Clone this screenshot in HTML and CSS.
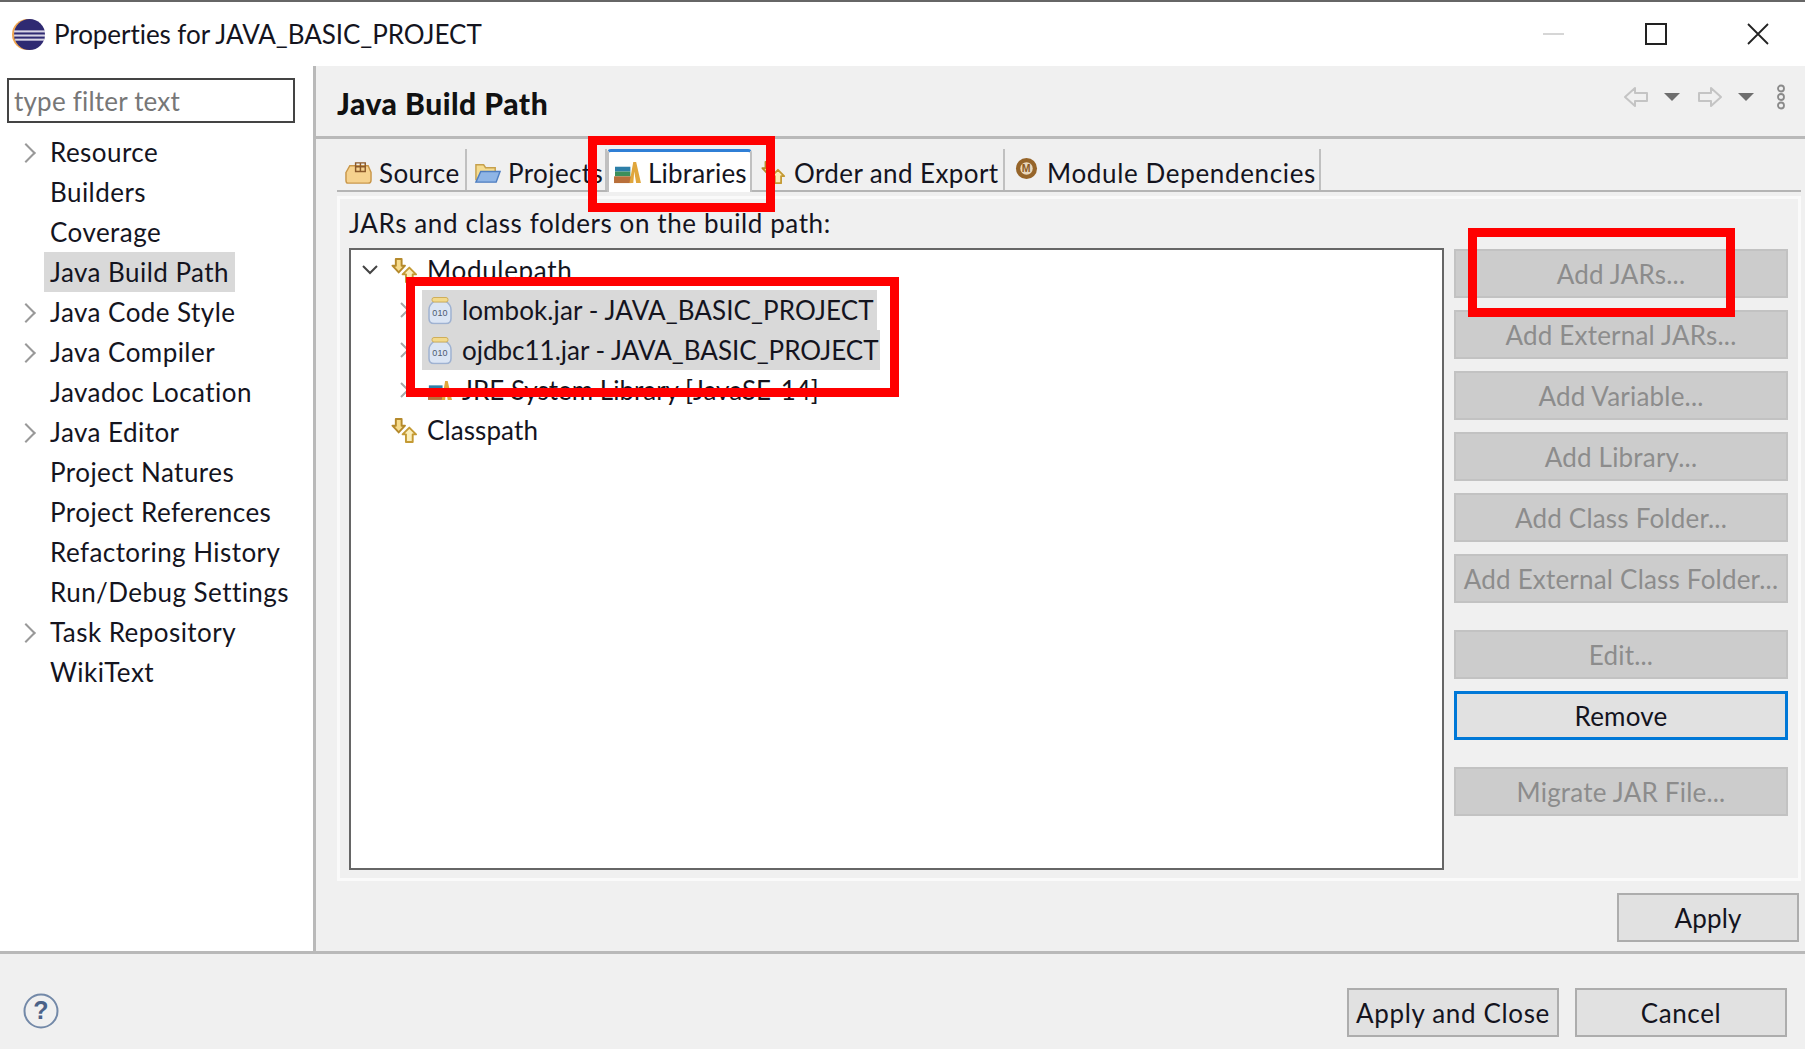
FILE: index.html
```html
<!DOCTYPE html>
<html lang="en">
<head>
  <meta charset="UTF-8" />
  <title>Properties for JAVA_BASIC_PROJECT</title>
  <link rel="stylesheet" href="styles.css">
</head>
<body>

<svg class="defs" width="0" height="0">
  <symbol id="i-arrows" viewBox="0 0 28 28">
    <path d="M5 2h6v7h3.500l-6.500 7-6.500-7H5z" fill="#f7dc8c" stroke="#b58a2c" stroke-width="2" stroke-linejoin="round"/>
    <path d="M19 11l7 7h-3.500v8h-7v-8H12z" fill="#fbeebb" stroke="#c49a34" stroke-width="2" stroke-linejoin="round"/>
  </symbol>
  <symbol id="i-jar" viewBox="0 0 24 28">
    <path d="M6 5h12c3 2 5 4 5 8v9c0 3-2 5-5 5H6c-3 0-5-2-5-5v-9c0-4 2-6 5-8z" fill="#dbe5f4" stroke="#9fb2d1" stroke-width="1.500"/>
    <rect x="4" y="1" width="16" height="4.500" rx="2" fill="#f2d98c" stroke="#cfae5a"/>
  </symbol>
  <symbol id="i-books" viewBox="0 0 28 26">
    <rect x="1" y="7" width="16" height="5" fill="#2d7fa8"/>
    <rect x="1" y="12" width="16" height="5" fill="#3c8f5b"/>
    <rect x="0" y="17" width="18" height="7" fill="#b96f3a"/>
    <path d="M16 24L20 2h3l5 22h-5l-2-12-1 12z" fill="#e0a63c"/>
  </symbol>
</svg>

<header class="titlebar">
  <svg class="logo" viewBox="0 0 32 32">
    <circle cx="15" cy="16" r="15" fill="#f0a650"/>
    <circle cx="17" cy="16" r="15" fill="#2f2a72"/>
    <rect x="2" y="12" width="30" height="2" fill="#d9d6e6"/>
    <rect x="2" y="16" width="30" height="2" fill="#d9d6e6"/>
    <rect x="3" y="20" width="28" height="2" fill="#d9d6e6"/>
  </svg>
  <span class="titlebar-text">Properties for JAVA_BASIC_PROJECT</span>
  <div class="winbtns">
    <svg class="winbtn" viewBox="0 0 22 22"><path d="M0 11h21" stroke="#c8c8c8" stroke-width="1.500"/></svg>
    <svg class="winbtn" viewBox="0 0 22 22"><rect x="1" y="1" width="20" height="20" fill="none" stroke="#222" stroke-width="2"/></svg>
    <svg class="winbtn" viewBox="0 0 22 22"><path d="M1 1l20 20M21 1L1 21" stroke="#222" stroke-width="1.800"/></svg>
  </div>
</header>

<div class="middle">
  <aside class="sidebar">
    <input class="filter" type="text" placeholder="type filter text">
    <ul class="navtree">
      <li class="has-kids">Resource</li>
      <li>Builders</li>
      <li>Coverage</li>
      <li class="current"><span>Java Build Path</span></li>
      <li class="has-kids">Java Code Style</li>
      <li class="has-kids">Java Compiler</li>
      <li>Javadoc Location</li>
      <li class="has-kids">Java Editor</li>
      <li>Project Natures</li>
      <li>Project References</li>
      <li>Refactoring History</li>
      <li>Run/Debug Settings</li>
      <li class="has-kids">Task Repository</li>
      <li>WikiText</li>
    </ul>
  </aside>

  <main class="content">
    <div class="page-head">
      <h1>Java Build Path</h1>
      <div class="page-tools">
        <svg class="nav-arrow" viewBox="0 0 26 22"><path d="M12 2L2 11l10 9v-5h12V7H12z" fill="none" stroke="#c4c4c4" stroke-width="2" stroke-linejoin="round"/></svg>
        <span class="caret"></span>
        <svg class="nav-arrow" viewBox="0 0 26 22"><path d="M14 2l10 9-10 9v-5H2V7h12z" fill="none" stroke="#c4c4c4" stroke-width="2" stroke-linejoin="round"/></svg>
        <span class="caret"></span>
        <svg class="dots" viewBox="0 0 10 26"><g fill="none" stroke="#8a8a8a" stroke-width="1.800"><circle cx="5" cy="4.500" r="3"/><circle cx="5" cy="13" r="3"/><circle cx="5" cy="21.500" r="3"/></g></svg>
      </div>
    </div>

    <div class="tabs">
      <div class="tab tab-source">
        <svg class="tab-icon" viewBox="0 0 28 24">
          <path d="M1 12l4-7h19l3 7v8c0 2-1 3-3 3H3c-1 0-2-1-2-3z" fill="#f6d28e" stroke="#c9974a" stroke-width="1.500"/>
          <path d="M11 2h10v9H11zM16 2v9M11 6h10" fill="none" stroke="#8c5a2a" stroke-width="1.500"/>
        </svg>
        Source
      </div>
      <div class="tab tab-projects">
        <svg class="tab-icon" viewBox="0 0 28 24">
          <path d="M2 20V4h8l2 3h10v5" fill="#f5dc90" stroke="#c6a04c" stroke-width="1.500"/>
          <path d="M7 11h20l-4 11H2z" fill="#8fb5e6" stroke="#4f7ec0" stroke-width="1.500"/>
        </svg>
        Projects
      </div>
      <div class="tab tab-active tab-libs">
        <svg class="tab-icon" viewBox="0 0 28 26"><use href="#i-books"/></svg>
        Libraries
      </div>
      <div class="tab tab-order">
        <svg class="tab-icon" viewBox="0 0 28 28"><use href="#i-arrows"/></svg>
        Order and Export
      </div>
      <div class="tab tab-module">
        <svg class="tab-icon module-icon" viewBox="0 0 24 24">
          <circle cx="12" cy="12" r="11" fill="#96652a"/>
          <circle cx="12" cy="12" r="6.500" fill="#e9d8bd"/>
          <text x="12" y="16" class="module-m">M</text>
        </svg>
        Module Dependencies
      </div>
    </div>

    <section class="panel">
      <div class="panel-label">JARs and class folders on the build path:</div>
      <div class="panel-body">
        <div class="pathtree">
          <div class="row">
            <svg class="chev" viewBox="0 0 16 10"><path d="M1 1l7 7 7-7" fill="none" stroke="#444" stroke-width="2"/></svg>
            <svg class="row-icon" viewBox="0 0 28 28"><use href="#i-arrows"/></svg>
            <span class="row-wider">Modulepath</span>
          </div>
          <div class="row row-sub row-selected">
            <svg class="chev-side" viewBox="0 0 10 16"><path d="M1 1l7 7-7 7" fill="none" stroke="#a8a8a8" stroke-width="2"/></svg>
            <svg class="row-icon" viewBox="0 0 24 28"><use href="#i-jar"/><text x="12" y="19" class="jar-bits">010</text></svg>
            <span>lombok.jar - JAVA_BASIC_PROJECT</span>
          </div>
          <div class="row row-sub row-selected row-wide">
            <svg class="chev-side" viewBox="0 0 10 16"><path d="M1 1l7 7-7 7" fill="none" stroke="#a8a8a8" stroke-width="2"/></svg>
            <svg class="row-icon" viewBox="0 0 24 28"><use href="#i-jar"/><text x="12" y="19" class="jar-bits">010</text></svg>
            <span class="row-tight">ojdbc11.jar - JAVA_BASIC_PROJECT</span>
          </div>
          <div class="row row-sub">
            <svg class="chev-side" viewBox="0 0 10 16"><path d="M1 1l7 7-7 7" fill="none" stroke="#a8a8a8" stroke-width="2"/></svg>
            <svg class="row-icon" viewBox="0 0 28 26"><use href="#i-books"/></svg>
            <span class="row-tight">JRE System Library [JavaSE-14]</span>
          </div>
          <div class="row">
            <span class="chev-gap"></span>
            <svg class="row-icon" viewBox="0 0 28 28"><use href="#i-arrows"/></svg>
            <span>Classpath</span>
          </div>
        </div>
        <div class="side-buttons">
          <button class="btn" disabled>Add JARs...</button>
          <button class="btn" disabled>Add External JARs...</button>
          <button class="btn" disabled>Add Variable...</button>
          <button class="btn" disabled>Add Library...</button>
          <button class="btn" disabled>Add Class Folder...</button>
          <button class="btn" disabled>Add External Class Folder...</button>
          <button class="btn btn-spaced" disabled>Edit...</button>
          <button class="btn btn-focus">Remove</button>
          <button class="btn btn-spaced" disabled>Migrate JAR File...</button>
        </div>
      </div>
    </section>

    <div class="apply-row">
      <button class="btn btn-apply">Apply</button>
    </div>
  </main>
</div>

<footer class="footer">
  <svg class="help" viewBox="0 0 36 36">
    <circle cx="18" cy="18" r="16.500" fill="none" stroke="#7389a8" stroke-width="2"/>
    <text x="18" y="26" class="help-q">?</text>
  </svg>
  <div class="footer-btns">
    <button class="btn btn-footer">Apply and Close</button>
    <button class="btn btn-footer">Cancel</button>
  </div>
</footer>

<!-- marcas rojas del tutorial -->
<div class="mark mark-tab"></div>
<div class="mark mark-jars"></div>
<div class="mark mark-add"></div>

</body>
</html>
```

FILE: styles.css
```css
* { margin: 0; padding: 0; box-sizing: border-box; }

body {
  width: 1805px;
  height: 1049px;
  overflow: hidden;
  position: relative;
  display: flex;
  flex-direction: column;
  background: #f0f0f0;
  font-family: Lato, 'Noto Sans', sans-serif;
  font-size: 26px;
  color: #14141e;
}

.defs { position: absolute; }

.jar-bits {
  font-family: 'Liberation Sans', sans-serif;
  font-size: 9px;
  text-anchor: middle;
  fill: #4d5a70;
}

/* Barra de titulo */
.titlebar {
  height: 66px;
  background: white;
  border-top: 2px solid #666;
  display: flex;
  align-items: center;
  padding-left: 12px;
  flex-shrink: 0;
}
.logo { width: 33px; height: 33px; margin-right: 9px; }
.titlebar-text { letter-spacing: -0.06px; }
.winbtns {
  margin-left: auto;
  display: flex;
  gap: 80px;
  padding-right: 36px;
}
.winbtn { width: 22px; height: 22px; display: block; }

.middle {
  height: 885px;
  display: flex;
  flex-shrink: 0;
}

/* Panel izquierdo */
.sidebar {
  width: 316px;
  background: white;
  border-right: 3px solid #b9b9b9;
  padding: 12px 0 0 7px;
  flex-shrink: 0;
}
.filter {
  display: block;
  width: 288px;
  height: 45px;
  border: 2px solid #444;
  font: inherit;
  letter-spacing: 0.2px;
  padding: 0 5px;
  outline: none;
}
.filter::placeholder { color: #777; opacity: 1; }

.navtree { list-style: none; margin-top: 9px; letter-spacing: 0.45px; }
.navtree li {
  height: 40px;
  line-height: 40px;
  padding-left: 43px;
  position: relative;
}
.navtree .has-kids::before {
  content: "";
  position: absolute;
  left: 12px;
  top: 14px;
  width: 12px;
  height: 12px;
  border-top: 2px solid #999;
  border-right: 2px solid #999;
  transform: rotate(45deg);
}
.navtree .current { padding-left: 37px; }
.navtree .current span {
  display: inline-block;
  height: 40px;
  padding: 0 6px;
  background: #d9d9d9;
}

/* Contenido */
.content { flex: 1; display: flex; flex-direction: column; }

.page-head {
  height: 73px;
  border-bottom: 3px solid #b9b9b9;
  display: flex;
  align-items: center;
  padding-left: 21px;
  flex-shrink: 0;
}
h1 {
  font-size: 30px;
  font-weight: 900;
  letter-spacing: 0.5px;
  color: #111;
  padding-top: 3px;
}
.page-tools {
  margin-left: auto;
  display: flex;
  align-items: center;
  padding: 0 19px 8px 0;
}
.nav-arrow { width: 26px; height: 22px; }
.caret {
  width: 0;
  height: 0;
  border-left: 8px solid transparent;
  border-right: 8px solid transparent;
  border-top: 8px solid #6e6e6e;
  margin: 0 17px 0 15px;
}
.dots { width: 10px; height: 26px; margin-left: 5px; }

.tabs {
  height: 43px;
  margin: 10px 4px 0 21px;
  display: flex;
  align-items: stretch;
  border-bottom: 2px solid #b5b5b5;
  letter-spacing: 0.4px;
  flex-shrink: 0;
}
.tab {
  display: flex;
  align-items: center;
  gap: 7px;
  padding: 6px 0 0 8px;
  border-right: 2px solid #c0c0c0;
  flex-shrink: 0;
}
.tab-icon { width: 27px; height: 25px; flex-shrink: 0; }
.tab-source { width: 130px; }
.tab-projects { width: 140px; padding-left: 7px; }
.tab-libs { width: 145px; letter-spacing: 0.2px; }
.tab-order { width: 253px; padding-left: 8px; }
.tab-module { width: 316px; padding-left: 10px; gap: 9px; letter-spacing: 0.65px; }
.tab-active {
  background: white;
  border-top: 3px solid #2f7fd6;
  border-left: 2px solid #c0c0c0;
  border-radius: 4px 4px 0 0;
  margin-bottom: -2px;
  padding: 1px 0 0 5px;
}
.module-icon { width: 23px; height: 23px; margin-bottom: 8px; }
.module-m {
  font-family: 'Liberation Sans', sans-serif;
  font-size: 11px;
  font-weight: bold;
  text-anchor: middle;
  fill: #8a5a24;
}

.panel {
  height: 685px;
  margin: 4px 4px 0 21px;
  border: 3px solid #fafafa;
  padding: 8px 0 0 9px;
  display: flex;
  flex-direction: column;
  flex-shrink: 0;
}
.panel-label { height: 36px; line-height: 32px; letter-spacing: 0.6px; }
.panel-body { display: flex; gap: 10px; margin-top: 5px; }

.pathtree {
  width: 1095px;
  height: 622px;
  background: white;
  border: 2px solid #666;
  letter-spacing: 0.1px;
  flex-shrink: 0;
}
.row {
  height: 40px;
  display: flex;
  align-items: center;
  padding-left: 11px;
}
.row-sub { padding-left: 0; }
.row-wider { letter-spacing: 0.7px; }
.row-tight { letter-spacing: 0; }
.chev { width: 16px; height: 10px; margin-right: 13px; flex-shrink: 0; }
.chev-gap { width: 29px; }
.chev-side { width: 10px; height: 16px; margin: 0 0 0 49px; flex-shrink: 0; }
.row-icon { width: 27px; height: 27px; margin-right: 9px; flex-shrink: 0; }
.row-sub .row-icon { margin: 0 10px 0 18px; width: 24px; height: 29px; }
.row-selected { position: relative; }
.row-selected::before {
  content: "";
  position: absolute;
  left: 71px;
  top: 0;
  width: 455px;
  height: 40px;
  background: #d9d9d9;
}
.row-wide::before { width: 458px; }
.row-selected > * { position: relative; }

.side-buttons {
  width: 334px;
  display: flex;
  flex-direction: column;
  gap: 12px;
  margin-top: 1px;
}
.btn {
  height: 49px;
  padding-top: 1px;
  background: #e1e1e1;
  border: 2px solid #adadad;
  font: inherit;
  letter-spacing: 0.2px;
  color: #14141e;
  flex-shrink: 0;
}
.btn:disabled {
  background: #cccccc;
  border-color: #c2c2c2;
  color: #8c8c8c;
}
.btn-spaced { margin-top: 15px; }
.btn-focus { background: #e1e1e1; border: 3px solid #0078d7; outline: none; }

.apply-row {
  display: flex;
  justify-content: flex-end;
  padding: 12px 6px 0 0;
}
.btn-apply { width: 182px; height: 49px; }

/* Pie */
.footer {
  flex: 1;
  border-top: 3px solid #b9b9b9;
  display: flex;
  align-items: flex-start;
  justify-content: space-between;
  padding: 34px 18px 0 23px;
}
.help { width: 36px; height: 36px; margin-top: 5px; }
.help-q {
  font-family: 'Liberation Sans', sans-serif;
  font-size: 25px;
  font-weight: bold;
  text-anchor: middle;
  fill: #4b6288;
}
.footer-btns { display: flex; gap: 16px; }
.btn-footer { width: 212px; height: 49px; letter-spacing: 0.65px; }

/* Recuadros rojos encima de la captura */
.mark {
  position: absolute;
  border: 9px solid #ff0000;
}
.mark-tab { left: 588px; top: 136px; width: 187px; height: 76px; }
.mark-jars { left: 406px; top: 277px; width: 493px; height: 120px; }
.mark-add { left: 1468px; top: 228px; width: 267px; height: 89px; }
```
